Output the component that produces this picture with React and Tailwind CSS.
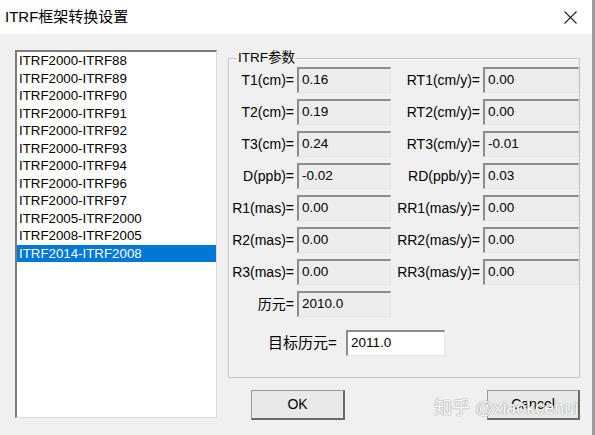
import React from 'react';

const frames = [
  'ITRF2000-ITRF88',
  'ITRF2000-ITRF89',
  'ITRF2000-ITRF90',
  'ITRF2000-ITRF91',
  'ITRF2000-ITRF92',
  'ITRF2000-ITRF93',
  'ITRF2000-ITRF94',
  'ITRF2000-ITRF96',
  'ITRF2000-ITRF97',
  'ITRF2005-ITRF2000',
  'ITRF2008-ITRF2005',
  'ITRF2014-ITRF2008',
];

// left / right parameter pairs, null = empty cell
const rows = [
  ['T1(cm)=', '0.16', 'RT1(cm/y)=', '0.00'],
  ['T2(cm)=', '0.19', 'RT2(cm/y)=', '0.00'],
  ['T3(cm)=', '0.24', 'RT3(cm/y)=', '-0.01'],
  ['D(ppb)=', '-0.02', 'RD(ppb/y)=', '0.03'],
  ['R1(mas)=', '0.00', 'RR1(mas/y)=', '0.00'],
  ['R2(mas)=', '0.00', 'RR2(mas/y)=', '0.00'],
  ['R3(mas)=', '0.00', 'RR3(mas/y)=', '0.00'],
  ['历元=', '2010.0', null, null],
];

const font = { fontFamily: '"Liberation Sans", "Noto Sans CJK SC", sans-serif' };

function Field({ value, white }) {
  return (
    <div
      className={`h-[26px] flex items-center pl-[3px] text-[13.5px] text-black border-t-2 border-l-2 border-t-[#8c8c8c] border-l-[#8c8c8c] border-r border-b border-r-[#e4e4e4] border-b-[#e4e4e4] ${
        white ? 'bg-white' : 'bg-[#ededed]'
      }`}
    >
      {value}
    </div>
  );
}

function Button({ children, className }) {
  return (
    <button
      className={`h-[30px] bg-[#e9e9e9] text-[14px] text-black border border-t-[#9a9a9a] border-l-[#9a9a9a] border-r-2 border-b-2 border-r-[#6a6a6a] border-b-[#6a6a6a] ${className}`}
    >
      {children}
    </button>
  );
}

export default function App() {
  return (
    <div className="w-[595px] h-[435px] relative overflow-hidden bg-[#f0f0f0] border-r-[3px] border-[#9c9c9c]" style={font}>
      {/* title bar */}
      <div className="h-[34px] bg-white flex items-center justify-between pl-[5px] pr-[14px]">
        <span className="text-[15px] text-black">ITRF框架转换设置</span>
        <svg width="13" height="13" viewBox="0 0 13 13" className="mr-[1px]">
          <path d="M0.5 0.5 L12.5 12.5 M12.5 0.5 L0.5 12.5" stroke="#222" strokeWidth="1.1" fill="none" />
        </svg>
      </div>

      <div className="flex pl-[15px] pt-[16px]">
        {/* frame list */}
        <div className="w-[202px] h-[368px] bg-white border-t-2 border-l-2 border-t-[#7c7c7c] border-l-[#7c7c7c] border-r border-b border-r-[#dcdcdc] border-b-[#dcdcdc]">
          {frames.map((f, i) => (
            <div
              key={f}
              className={`h-[17.5px] leading-[17.5px] pl-[2px] text-[13.3px] ${
                i === frames.length - 1 ? 'bg-[#0078d7] text-white' : 'text-black'
              }`}
            >
              {f}
            </div>
          ))}
        </div>

        <div className="ml-[11px] pt-[8px] flex flex-col">
          {/* parameter group */}
          <div className="relative w-[352px] h-[320px] border border-[#c4c4c4] shadow-[inset_1px_1px_0_#ffffff]">
            <span className="absolute left-[8px] top-[-10px] px-[1px] bg-[#f0f0f0] text-[13.5px] leading-[18px] text-black">
              ITRF参数
            </span>

            <div className="pt-[8px] grid grid-cols-[68px_94px_92px_96px] gap-y-[6px]">
              {rows.map(([l1, v1, l2, v2]) => (
                <React.Fragment key={l1}>
                  <div className="h-[26px] flex items-center justify-end pr-[3px] text-[14px] text-black whitespace-nowrap">
                    {l1}
                  </div>
                  <Field value={v1} />
                  {l2 ? (
                    <>
                      <div className="h-[26px] flex items-center justify-end pr-[3px] text-[14px] text-black whitespace-nowrap">
                        {l2}
                      </div>
                      <Field value={v2} />
                    </>
                  ) : (
                    <>
                      <div />
                      <div />
                    </>
                  )}
                </React.Fragment>
              ))}
            </div>

            <div className="mt-[13px] pl-[39px] flex items-center">
              <span className="w-[78px] text-[15px] text-black">目标历元=</span>
              <div className="w-[99px]">
                <Field value="2011.0" white />
              </div>
            </div>
          </div>

          {/* dialog buttons */}
          <div className="mt-[12px] pl-[23px] flex justify-between">
            <Button className="w-[94px]">OK</Button>
            <Button className="w-[93px]">Cancel</Button>
          </div>
        </div>
      </div>

      {/* watermark */}
      <div
        className="absolute left-[434px] top-[395px] text-[18px] text-white whitespace-nowrap"
        style={{ textShadow: '0 0 1px #8a8a8a, 0 0 1px #8a8a8a' }}
      >
        知乎 @xiaokcehui
      </div>
    </div>
  );
}
